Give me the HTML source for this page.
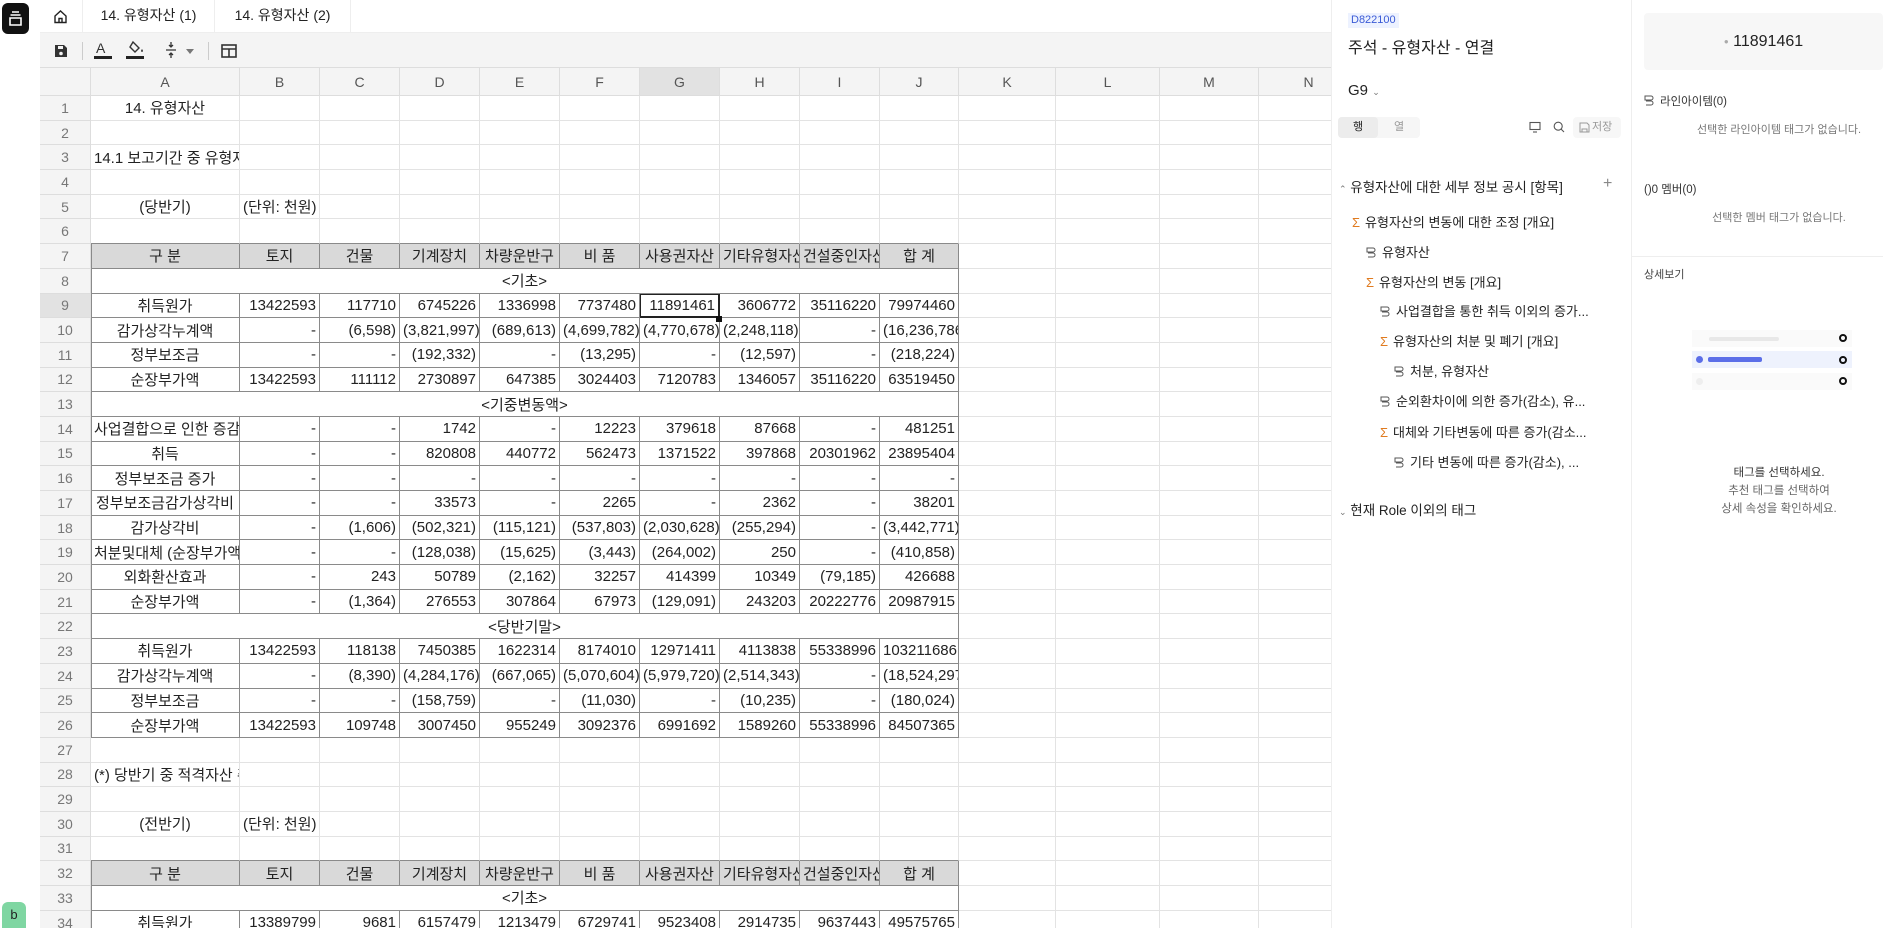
<!DOCTYPE html>
<html><head><meta charset="utf-8">
<style>
*{box-sizing:border-box;margin:0;padding:0}
body{width:1883px;height:928px;overflow:hidden;background:#fff;font-family:"Liberation Sans","Noto Sans CJK KR",sans-serif;color:#222;position:relative}
.abs{position:absolute}
#sheet{position:absolute;left:40px;top:68px;width:1291px;height:860px;overflow:hidden}
table{border-collapse:separate;border-spacing:0;table-layout:fixed;width:1370px}
td,th{border-right:1px solid #e3e3e3;border-bottom:1px solid #e3e3e3;height:24.7px;font-size:15px;font-weight:normal;white-space:nowrap;overflow:hidden;padding:0 3px;text-align:right;font-family:"Liberation Sans","Noto Sans CJK KR",sans-serif}
thead th{height:28px;background:#f4f4f4;color:#555;text-align:center;font-size:14px;border-color:#ddd}
td.rh{background:#f4f4f4;color:#777;text-align:center;font-size:14px;border-color:#ddd}
td.c{text-align:center}
td.l{text-align:left}
td.t{border-right-color:#8a8a8a;border-bottom-color:#8a8a8a}
td.a{box-shadow:inset 1px 0 #8a8a8a}
td.bb{border-bottom-color:#8a8a8a}
td.h{background:#d9d9d9}
.sel{background:#e2e2e2!important}
.ind{position:absolute;font-size:13px;color:#222;white-space:nowrap}
.sig{color:#e07b20;font-size:13px;margin-right:5px}
.tag{display:inline-block;width:10px;height:11px;margin-right:6px;vertical-align:-1px}
</style></head><body>

<div class="abs" style="left:2px;top:3px;width:27px;height:31px;background:#111;border-radius:6px"></div>
<svg class="abs" style="left:8px;top:11px" width="15" height="16" viewBox="0 0 15 16"><path d="M4 1h7M2.5 4h10M2 7h11v7H2z" stroke="#fff" stroke-width="1.6" fill="none"/></svg>
<div class="abs" style="left:2px;top:902px;width:24px;height:26px;background:#7fd6a2;border-radius:6px 6px 0 0;font-size:13px;text-align:center;line-height:26px">b</div>

<div class="abs" style="left:40px;top:0;width:1291px;height:33px;background:#fff;border-bottom:1px solid #eee"></div>
<svg class="abs" style="left:53px;top:9px" width="15" height="15" viewBox="0 0 15 15"><path d="M2 7L7.5 2 13 7v6.5H2z M6 13.5v-4h3v4" stroke="#222" stroke-width="1.4" fill="none"/></svg>
<div class="abs" style="left:82px;top:0;width:133px;height:33px;border-left:1px solid #eee;border-right:1px solid #eee;font-size:14px;line-height:31px;text-align:center">14. 유형자산 (1)</div>
<div class="abs" style="left:215px;top:0;width:136px;height:33px;border-right:1px solid #eee;font-size:14px;line-height:31px;text-align:center">14. 유형자산 (2)</div>

<div class="abs" style="left:40px;top:33px;width:1291px;height:35px;background:#f4f4f4;border-bottom:1px solid #ddd"></div>
<svg class="abs" style="left:53px;top:43px" width="16" height="16" viewBox="0 0 16 16"><path d="M2 2h9l3 3v9H2z" fill="#333"/><rect x="5" y="3" width="5" height="3" fill="#f4f4f4"/><circle cx="8" cy="10.5" r="1.8" fill="#f4f4f4"/></svg>
<div class="abs" style="left:82px;top:42px;width:1px;height:18px;background:#ccc"></div>
<div class="abs" style="left:96px;top:40px;font-size:14px;color:#333">A</div>
<div class="abs" style="left:94px;top:56px;width:18px;height:3px;background:#222"></div>
<svg class="abs" style="left:128px;top:40px" width="18" height="15" viewBox="0 0 18 15"><path d="M5 2l6 6-4 4-5-5z" stroke="#333" stroke-width="1.4" fill="none"/><path d="M14 9c1 1.5 1.5 2.3 0 3-1.5-.7-1-1.5 0-3z" fill="#333"/></svg>
<div class="abs" style="left:126px;top:56px;width:18px;height:3px;background:#222"></div>
<svg class="abs" style="left:164px;top:41px" width="14" height="18" viewBox="0 0 14 18"><path d="M2 9h10M7 1v5M7 12v5M5 4l2 2 2-2M5 14l2-2 2 2" stroke="#333" stroke-width="1.3" fill="none"/></svg>
<div class="abs" style="left:186px;top:49px;width:0;height:0;border-left:4px solid transparent;border-right:4px solid transparent;border-top:5px solid #777"></div>
<div class="abs" style="left:208px;top:42px;width:1px;height:18px;background:#ccc"></div>
<svg class="abs" style="left:221px;top:44px" width="16" height="14" viewBox="0 0 16 14"><rect x="1" y="1" width="14" height="12" fill="none" stroke="#333" stroke-width="1.6"/><path d="M1 5h14M8 5v8" stroke="#333" stroke-width="1.6"/></svg>

<div id="sheet">
<table>
<colgroup><col style="width:51px"><col style="width:149px"><col style="width:80px"><col style="width:80px"><col style="width:80px"><col style="width:80px"><col style="width:80px"><col style="width:80px"><col style="width:80px"><col style="width:80px"><col style="width:79px"><col style="width:97px"><col style="width:104px"><col style="width:99px"><col style="width:100px"><col style="width:51px"></colgroup>
<thead><tr><th></th><th>A</th><th>B</th><th>C</th><th>D</th><th>E</th><th>F</th><th class="sel">G</th><th>H</th><th>I</th><th>J</th><th>K</th><th>L</th><th>M</th><th>N</th><th>O</th></tr></thead>
<tbody id="tb"></tbody>
</table>
</div>

<div class="abs" style="left:1331px;top:0;width:1px;height:928px;background:#eee"></div>
<div class="abs" style="left:1348px;top:13px;height:15px;padding:0 3px;background:#edf2ff;color:#3b5bd6;font-size:11px;line-height:15px">D822100</div>
<div class="abs" style="left:1348px;top:34px;font-size:16px;color:#222">주석 - 유형자산 - 연결</div>
<div class="abs" style="left:1348px;top:82px;font-size:15px;color:#222">G9 <span style="font-size:9px;color:#777">⌄</span></div>
<div class="abs" style="left:1338px;top:117px;width:82px;height:21px;background:#f6f6f6;border-radius:4px"></div>
<div class="abs" style="left:1338px;top:117px;width:40px;height:21px;background:#ececec;border-radius:4px;font-size:11px;text-align:center;line-height:21px">행</div>
<div class="abs" style="left:1379px;top:117px;width:40px;height:21px;font-size:11px;text-align:center;line-height:21px;color:#999">열</div>
<svg class="abs" style="left:1529px;top:121px" width="12" height="12" viewBox="0 0 12 12"><rect x="1" y="1.5" width="10" height="7" fill="none" stroke="#555" stroke-width="1.1"/><path d="M4 11h4" stroke="#555" stroke-width="1.1"/></svg>
<svg class="abs" style="left:1553px;top:121px" width="12" height="12" viewBox="0 0 12 12"><circle cx="5.2" cy="5.2" r="4" fill="none" stroke="#555" stroke-width="1.1"/><path d="M8 8l3 3" stroke="#555" stroke-width="1.1"/></svg>
<div class="abs" style="left:1573px;top:117px;width:48px;height:21px;background:#f7f7f7;border-radius:4px;font-size:11px;color:#999;line-height:21px;padding-left:19px">저장</div>
<svg class="abs" style="left:1579px;top:122px" width="11" height="11" viewBox="0 0 11 11"><path d="M1 1h7l2 2v7H1z M3 10V7h5v3" fill="none" stroke="#999" stroke-width="1"/></svg>

<div class="ind" style="left:1339px;top:176px;font-size:13.5px"><span style="font-size:9px;color:#777">⌃</span> 유형자산에 대한 세부 정보 공시 [항목]</div>
<div class="abs" style="left:1603px;top:175px;font-size:16px;color:#888">+</div>
<div class="ind" style="left:1352px;top:212px"><span class="sig">Σ</span>유형자산의 변동에 대한 조정 [개요]</div>
<div class="ind" style="left:1366px;top:242px"><svg class="tag" viewBox="0 0 10 11"><path d="M1 1h6a2 2 0 010 4H1zM2 6h5a2 2 0 010 4H2" fill="none" stroke="#555" stroke-width="1"/></svg>유형자산</div>
<div class="ind" style="left:1366px;top:272px"><span class="sig">Σ</span>유형자산의 변동 [개요]</div>
<div class="ind" style="left:1380px;top:301px"><svg class="tag" viewBox="0 0 10 11"><path d="M1 1h6a2 2 0 010 4H1zM2 6h5a2 2 0 010 4H2" fill="none" stroke="#555" stroke-width="1"/></svg>사업결합을 통한 취득 이외의 증가...</div>
<div class="ind" style="left:1380px;top:331px"><span class="sig">Σ</span>유형자산의 처분 및 폐기 [개요]</div>
<div class="ind" style="left:1394px;top:361px"><svg class="tag" viewBox="0 0 10 11"><path d="M1 1h6a2 2 0 010 4H1zM2 6h5a2 2 0 010 4H2" fill="none" stroke="#555" stroke-width="1"/></svg>처분, 유형자산</div>
<div class="ind" style="left:1380px;top:391px"><svg class="tag" viewBox="0 0 10 11"><path d="M1 1h6a2 2 0 010 4H1zM2 6h5a2 2 0 010 4H2" fill="none" stroke="#555" stroke-width="1"/></svg>순외환차이에 의한 증가(감소), 유...</div>
<div class="ind" style="left:1380px;top:422px"><span class="sig">Σ</span>대체와 기타변동에 따른 증가(감소...</div>
<div class="ind" style="left:1394px;top:452px"><svg class="tag" viewBox="0 0 10 11"><path d="M1 1h6a2 2 0 010 4H1zM2 6h5a2 2 0 010 4H2" fill="none" stroke="#555" stroke-width="1"/></svg>기타 변동에 따른 증가(감소), ...</div>
<div class="ind" style="left:1339px;top:499px;font-size:13.5px"><span style="font-size:9px;color:#777">⌄</span> 현재 Role 이외의 태그</div>

<div class="abs" style="left:1631px;top:0;width:1px;height:928px;background:#eee"></div>
<div class="abs" style="left:1644px;top:13px;width:239px;height:57px;background:#f7f7f7;border-radius:4px;text-align:center;line-height:57px;font-size:16px;color:#222"><span style="color:#aaa;font-size:8px;vertical-align:2px">●</span> 11891461</div>
<div class="abs" style="left:1644px;top:93px;font-size:11.5px;color:#333"><svg class="tag" viewBox="0 0 10 11"><path d="M1 1h6a2 2 0 010 4H1zM2 6h5a2 2 0 010 4H2" fill="none" stroke="#555" stroke-width="1"/></svg>라인아이템(0)</div>
<div class="abs" style="left:1632px;top:121px;width:294px;text-align:center;font-size:11px;color:#777">선택한 라인아이템 태그가 없습니다.</div>
<div class="abs" style="left:1644px;top:181px;font-size:11.5px;color:#333">()0 멤버(0)</div>
<div class="abs" style="left:1632px;top:209px;width:294px;text-align:center;font-size:11px;color:#777">선택한 멤버 태그가 없습니다.</div>
<div class="abs" style="left:1632px;top:256px;width:251px;height:1px;background:#eee"></div>
<div class="abs" style="left:1644px;top:266px;font-size:11px;color:#444">상세보기</div>
<div class="abs" style="left:1692px;top:330px;width:160px;height:17px;background:#fafafa"></div>
<div class="abs" style="left:1709px;top:337px;width:70px;height:4px;background:#e8e8e8;border-radius:2px"></div>
<div class="abs" style="left:1692px;top:351px;width:160px;height:17px;background:#eef2fd"></div>
<div class="abs" style="left:1696px;top:356px;width:7px;height:7px;background:#5b6ee8;border-radius:50%"></div>
<div class="abs" style="left:1708px;top:357px;width:54px;height:5px;background:#5b6ee8;border-radius:2px"></div>
<div class="abs" style="left:1692px;top:373px;width:160px;height:17px;background:#fafafa"></div>
<div class="abs" style="left:1696px;top:378px;width:7px;height:7px;background:#eee;border-radius:50%"></div>
<div class="abs" style="left:1839px;top:334px;width:8px;height:8px;border:2px solid #111;border-radius:50%"></div>
<div class="abs" style="left:1839px;top:356px;width:8px;height:8px;border:2px solid #111;border-radius:50%"></div>
<div class="abs" style="left:1839px;top:377px;width:8px;height:8px;border:2px solid #111;border-radius:50%"></div>
<div class="abs" style="left:1632px;top:464px;width:294px;text-align:center;font-size:11.5px;color:#333;line-height:18px">태그를 선택하세요.<br><span style="color:#666">추천 태그를 선택하여<br>상세 속성을 확인하세요.</span></div>

<script>
var D={
1:[["14. 유형자산","c"]],
3:[["14.1 보고기간 중 유형자산 변동내역","l"]],
5:[["(당반기)","c"],["(단위: 천원)","l"]],
7:"H",
8:["<기초>"],
9:["취득원가","13422593","117710","6745226","1336998","7737480","11891461","3606772","35116220","79974460"],
10:["감가상각누계액","-","(6,598)","(3,821,997)","(689,613)","(4,699,782)","(4,770,678)","(2,248,118)","-","(16,236,786)"],
11:["정부보조금","-","-","(192,332)","-","(13,295)","-","(12,597)","-","(218,224)"],
12:["순장부가액","13422593","111112","2730897","647385","3024403","7120783","1346057","35116220","63519450"],
13:["<기중변동액>"],
14:["사업결합으로 인한 증감","-","-","1742","-","12223","379618","87668","-","481251"],
15:["취득","-","-","820808","440772","562473","1371522","397868","20301962","23895404"],
16:["정부보조금 증가","-","-","-","-","-","-","-","-","-"],
17:["정부보조금감가상각비","-","-","33573","-","2265","-","2362","-","38201"],
18:["감가상각비","-","(1,606)","(502,321)","(115,121)","(537,803)","(2,030,628)","(255,294)","-","(3,442,771)"],
19:["처분및대체 (순장부가액)","-","-","(128,038)","(15,625)","(3,443)","(264,002)","250","-","(410,858)"],
20:["외화환산효과","-","243","50789","(2,162)","32257","414399","10349","(79,185)","426688"],
21:["순장부가액","-","(1,364)","276553","307864","67973","(129,091)","243203","20222776","20987915"],
22:["<당반기말>"],
23:["취득원가","13422593","118138","7450385","1622314","8174010","12971411","4113838","55338996","103211686"],
24:["감가상각누계액","-","(8,390)","(4,284,176)","(667,065)","(5,070,604)","(5,979,720)","(2,514,343)","-","(18,524,297)"],
25:["정부보조금","-","-","(158,759)","-","(11,030)","-","(10,235)","-","(180,024)"],
26:["순장부가액","13422593","109748","3007450","955249","3092376","6991692","1589260","55338996","84507365"],
28:[["(*) 당반기 중 적격자산 취득","l"]],
30:[["(전반기)","c"],["(단위: 천원)","l"]],
32:"H",
33:["<기초>"],
34:["취득원가","13389799","9681","6157479","1213479","6729741","9523408","2914735","9637443","49575765"]
};
var HD=["구 분","토지","건물","기계장치","차량운반구","비 품","사용권자산","기타유형자산","건설중인자산","합 계"];
var h="";
for(var r=1;r<=34;r++){
 var d=D[r];h+="<tr><td class='rh"+(r==9?" sel":"")+"'>"+r+"</td>";
 var bb=(r==6||r==31)?" bb":"";
 if(d=="H"){HD.forEach(function(x,i){h+="<td class='c t h"+(i==0?" a":"")+"'>"+x+"</td>"});}
 else if(d&&d.length==1&&typeof d[0]=="string"){h+="<td colspan='10' class='c t a'>"+d[0].replace(/</g,"&lt;").replace(/>/g,"&gt;")+"</td>";}
 else if(d&&typeof d[0]=="string"){d.forEach(function(x,i){var st=i==6&&r==9?" style='border:2px solid #222;border-left:1px solid #222;border-top:1px solid #222'":"";h+="<td class='t"+(i==0?" c a":"")+"'"+st+">"+x+"</td>"});}
 else{for(var c=0;c<10;c++){var it=d&&d[c];h+="<td class='"+(it?it[1]:"")+bb+"'>"+(it?it[0]:"")+"</td>";}}
 for(var c=0;c<5;c++)h+="<td></td>";
 h+="</tr>";
}
document.getElementById("tb").innerHTML=h;
</script>
<div class="abs" style="left:716px;top:316px;width:6px;height:6px;background:#111"></div>
</body></html>
